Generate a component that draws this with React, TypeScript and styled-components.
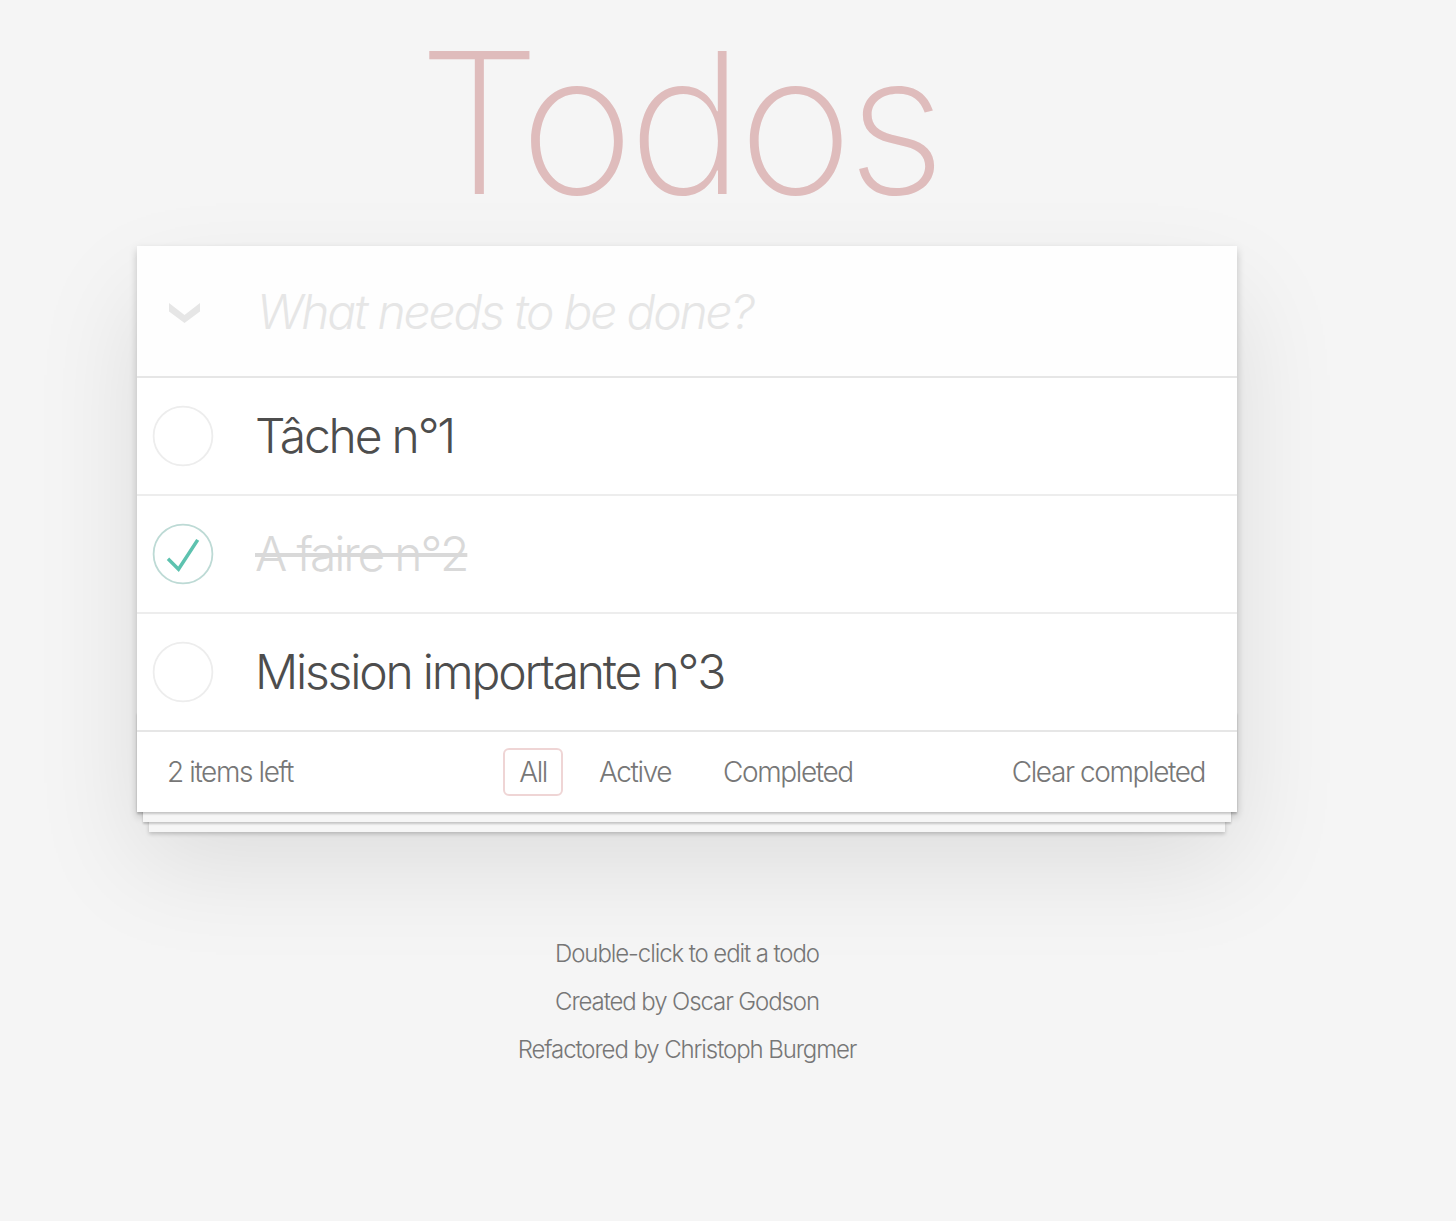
import React from "react";
import styled, { createGlobalStyle, css } from "styled-components";

const GlobalStyle = createGlobalStyle`
  html, body {
    margin: 0;
    padding: 0;
  }
  body {
    background: #f5f5f5;
    color: #4d4d4d;
    font-family: Inter, "Helvetica Neue", Helvetica, Arial, sans-serif;
    font-weight: 300;
    -webkit-font-smoothing: antialiased;
  }
  * { box-sizing: border-box; }
`;

const Page = styled.div`
  width: 1100px;
  margin: 0 0 0 137px;
  padding-top: 23px;
`;

const Title = styled.h1`
  margin: 0 0 23px 0;
  padding-right: 16px;
  height: 200px;
  font-size: 196px;
  line-height: 200px;
  font-weight: 200;
  text-align: center;
  color: #dfbcbc;
  letter-spacing: -6px;
`;

const Card = styled.section`
  position: relative;
  background: #fff;
  box-shadow: 0 4px 8px 0 rgba(0, 0, 0, 0.2), 0 50px 100px 0 rgba(0, 0, 0, 0.1);
`;

const Header = styled.header`
  display: flex;
  align-items: center;
  height: 130px;
  background: rgba(0, 0, 0, 0.003);
`;

const ToggleAll = styled.label`
  width: 120px;
  height: 100%;
  display: flex;
  align-items: center;
  padding: 4px 0 0 32px;
  flex-shrink: 0;
`;

const NewTodo = styled.input`
  flex: 1;
  height: 100%;
  border: none;
  outline: none;
  background: transparent;
  padding: 0 32px 0 0;
  margin: 0;
  font-family: inherit;
  font-size: 48px;
  font-weight: 260;
  letter-spacing: -2.2px;
  color: #4d4d4d;
  &::placeholder {
    font-style: italic;
    font-weight: 260;
    color: #e6e6e6;
  }
`;

const Main = styled.section`
  border-top: 2px solid #e6e6e6;
`;

const TodoList = styled.ul`
  list-style: none;
  margin: 0;
  padding: 0;
`;

const TodoItem = styled.li`
  display: flex;
  align-items: center;
  height: 118px;
  border-bottom: 2px solid #ededed;
  &:last-child {
    height: 116px;
    border-bottom: none;
  }
`;

const CheckCell = styled.div`
  width: 118px;
  flex-shrink: 0;
  padding-left: 16px;
  display: flex;
  align-items: center;
`;

const TodoLabel = styled.label<{ $done?: boolean }>`
  font-size: 48px;
  line-height: 1.2;
  font-weight: 260;
  letter-spacing: -2.2px;
  color: #4d4d4d;
  white-space: nowrap;
  ${(p) =>
    p.$done &&
    css`
      color: #d9d9d9;
      text-decoration: line-through;
      text-decoration-thickness: 4px;
      text-decoration-color: #d9d9d9;
    `}
`;

const Footer = styled.footer`
  position: relative;
  display: grid;
  grid-template-columns: 1fr auto 1fr;
  align-items: center;
  height: 82px;
  padding: 0 32px 0 30px;
  border-top: 2px solid #e6e6e6;
  color: #777;
  font-size: 28px;
  font-weight: 260;
  letter-spacing: -1.4px;
  &::before {
    content: "";
    position: absolute;
    right: 0;
    bottom: 0;
    left: 0;
    height: 100px;
    overflow: hidden;
    pointer-events: none;
    box-shadow: 0 2px 2px rgba(0, 0, 0, 0.2), 0 16px 0 -6px #f6f6f6,
      0 18px 2px -6px rgba(0, 0, 0, 0.2), 0 32px 0 -12px #f6f6f6,
      0 34px 4px -12px rgba(0, 0, 0, 0.2);
  }
`;

const Count = styled.span`
  justify-self: start;
`;

const Filters = styled.ul`
  display: flex;
  gap: 20px;
  list-style: none;
  margin: 0;
  padding: 0;
`;

const FilterLink = styled.a<{ $selected?: boolean }>`
  display: block;
  padding: 6px 14px;
  line-height: 32px;
  border: 2px solid ${(p) => (p.$selected ? "rgba(175, 47, 47, 0.2)" : "transparent")};
  border-radius: 6px;
  color: inherit;
  text-decoration: none;
  cursor: pointer;
`;

const ClearButton = styled.button`
  justify-self: end;
  border: none;
  background: none;
  padding: 0;
  margin: 0;
  font-family: inherit;
  font-size: 28px;
  font-weight: 260;
  letter-spacing: -1.4px;
  color: #777;
  cursor: pointer;
`;

const Info = styled.footer`
  margin: 130px 0 0 0;
  text-align: center;
  color: #777;
  font-size: 24px;
  font-weight: 260;
  letter-spacing: -1.1px;
  p {
    margin: 24px 0;
    line-height: 1;
  }
`;

const Chevron = () => (
  <svg width="31" height="20" viewBox="0 0 31 20" aria-hidden="true">
    <polygon points="0,0 15.5,12 31,0 31,8.5 15.5,20 0,8.5" fill="#e6e6e6" />
  </svg>
);

const CheckCircle = ({ done }: { done: boolean }) => (
  <svg width="60" height="60" viewBox="0 0 100 100" style={{ overflow: "visible" }}>
    <circle cx="50" cy="50" r="49" fill="none" stroke={done ? "#bddad5" : "#ededed"} strokeWidth="3" />
    {done && <path fill="#5dc2af" d="M72 25L42 71 27 56l-4 4 20 20 34-52z" />}
  </svg>
);

const todos = [
  { id: 1, title: "Tâche n°1", done: false },
  { id: 2, title: "A faire n°2", done: true },
  { id: 3, title: "Mission importante n°3", done: false },
];

export default function App() {
  return (
    <>
      <GlobalStyle />
      <Page>
        <Title>Todos</Title>
        <Card>
          <Header>
            <ToggleAll>
              <Chevron />
            </ToggleAll>
            <NewTodo placeholder="What needs to be done?" />
          </Header>
          <Main>
            <TodoList>
              {todos.map((t) => (
                <TodoItem key={t.id}>
                  <CheckCell>
                    <CheckCircle done={t.done} />
                  </CheckCell>
                  <TodoLabel $done={t.done}>{t.title}</TodoLabel>
                </TodoItem>
              ))}
            </TodoList>
          </Main>
          <Footer>
            <Count>2 items left</Count>
            <Filters>
              <li>
                <FilterLink $selected>All</FilterLink>
              </li>
              <li>
                <FilterLink>Active</FilterLink>
              </li>
              <li>
                <FilterLink>Completed</FilterLink>
              </li>
            </Filters>
            <ClearButton>Clear completed</ClearButton>
          </Footer>
        </Card>
        <Info>
          <p>Double-click to edit a todo</p>
          <p>Created by Oscar Godson</p>
          <p>Refactored by Christoph Burgmer</p>
        </Info>
      </Page>
    </>
  );
}
